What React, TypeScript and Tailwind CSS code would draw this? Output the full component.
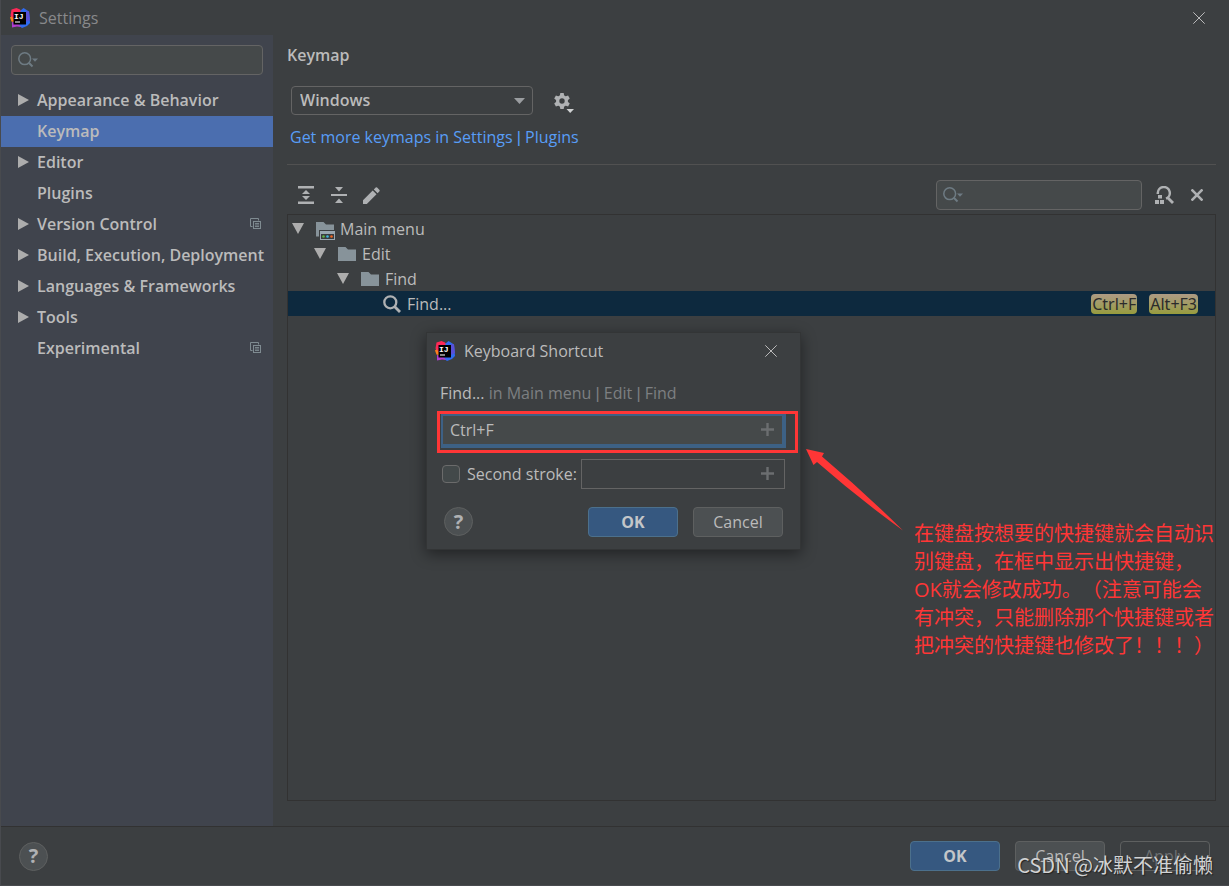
import { useState } from 'react';
import type { ReactNode } from 'react';
import clsx from 'clsx';

type Category = {
  label: string;
  expandable?: boolean;
  projectLevel?: boolean;
};

const categories: Category[] = [
  { label: 'Appearance & Behavior', expandable: true },
  { label: 'Keymap' },
  { label: 'Editor', expandable: true },
  { label: 'Plugins' },
  { label: 'Version Control', expandable: true, projectLevel: true },
  { label: 'Build, Execution, Deployment', expandable: true },
  { label: 'Languages & Frameworks', expandable: true },
  { label: 'Tools', expandable: true },
  { label: 'Experimental', projectLevel: true },
];

function IdeaLogo() {
  return (
    <svg viewBox="0 0 20 20" className="size-5 shrink-0" aria-hidden="true">
      <path d="M0 9.5 2 7.5 5 10V14.5L1.5 13.5Z" fill="#fc801d" />
      <path d="M1.5 1.5 6.5 0 10 1.5 12 4 9 10 4 11 0.5 7.5Z" fill="#fe2857" />
      <path d="M10.5 2.5 13.5 0 19 3.5 20 15 17 18 12 20 8 17Z" fill="#2f6bf0" />
      <path d="M16 3 19 3.5 20 12 16 14Z" fill="#5a50d8" />
      <path d="M2 14 8 15 11 19 7 18.5 2 19.5Z" fill="#b13ccf" />
      <rect x="3.5" y="4" width="12.5" height="12.5" fill="#000" />
      <text x="4" y="10.5" fill="#fff" fontSize="8" fontWeight="700" fontFamily="Liberation Mono, monospace">
        IJ
      </text>
      <rect x="5" y="13.4" width="5" height="1.2" fill="#ddd" />
    </svg>
  );
}

function ArrowRight() {
  return (
    <svg viewBox="0 0 11 12" className="h-3 w-[11px]" aria-hidden="true">
      <path d="M0 0 11 6 0 12Z" fill="#adadad" />
    </svg>
  );
}

function ArrowDown() {
  return (
    <svg viewBox="0 0 12 11" className="h-[11px] w-3 shrink-0" aria-hidden="true">
      <path d="M0 0H12L6 11Z" fill="#adadad" />
    </svg>
  );
}

function ProjectLevelIcon() {
  return (
    <svg viewBox="0 0 11 11" className="size-[11px]" fill="none" stroke="#7f8b91" aria-hidden="true">
      <path d="M2.5 8.5H0.5V0.5H8.5V2.5" />
      <rect x="3.5" y="3.5" width="7" height="7" />
      <path d="M5 5.5H9M5 7H9M5 8.5H9" strokeWidth="0.9" />
    </svg>
  );
}

function SearchFieldIcon() {
  return (
    <svg viewBox="0 0 20 16" className="h-4 w-5" fill="none" aria-hidden="true">
      <circle cx="6.7" cy="6.7" r="5.9" stroke="#6e7b83" strokeWidth="1.5" />
      <path d="M10.8 10.8 14.5 14.5" stroke="#6e7b83" strokeWidth="2" />
      <path d="M14 6.5H20L17 9.8Z" fill="#6e7b83" />
    </svg>
  );
}

function FolderIcon() {
  return (
    <svg viewBox="0 0 18 14" className="h-3.5 w-[18px]" aria-hidden="true">
      <path d="M0 0H7.5L10 2.5H18V14H0Z" fill="#87939a" />
    </svg>
  );
}

function MenuFolderIcon() {
  return (
    <svg viewBox="0 0 19 18" className="h-[18px] w-[19px]" aria-hidden="true">
      <path d="M0 0H7.5L10 2.5H18V8H3V14.5H0Z" fill="#87939a" />
      <path d="M4 9H19V18H4Z" fill="#9aa7b0" />
      <rect x="5" y="12" width="13" height="5" fill="#393c3e" />
      <circle cx="7.5" cy="14.5" r="1.3" fill="#62b543" />
      <circle cx="11.5" cy="14.5" r="1.3" fill="#40b6e0" />
      <circle cx="15.5" cy="14.5" r="1.3" fill="#f26522" />
    </svg>
  );
}

function MagnifierIcon() {
  return (
    <svg viewBox="0 0 18 18" className="size-[18px]" fill="none" stroke="#afb1b3" aria-hidden="true">
      <circle cx="7.3" cy="7.3" r="6" strokeWidth="2.3" />
      <path d="M11.5 11.5 17 17" strokeWidth="2.8" />
    </svg>
  );
}

function ExpandAllIcon() {
  return (
    <svg viewBox="0 0 16 18" className="h-[18px] w-4" fill="#afb1b3" aria-hidden="true">
      <path d="M0 0H16V2.4H0ZM0 15.6H16V18H0ZM8 4 12 8H4ZM4 10H12L8 14Z" />
    </svg>
  );
}

function CollapseAllIcon() {
  return (
    <svg viewBox="0 0 16 16" className="size-4" fill="#afb1b3" aria-hidden="true">
      <path d="M0 6.9H16V9.1H0ZM4 0H12L8 4.5ZM8 11.5 12 16H4Z" />
    </svg>
  );
}

function PencilIcon() {
  return (
    <svg viewBox="0 0 17 17" className="size-[17px]" fill="#afb1b3" aria-hidden="true">
      <path d="M0 13.2 9.7 3.5 13.5 7.3 3.8 17H0ZM10.8 2.4 12.7 0.5Q13.4 0 14.1 0.5L16.5 2.9Q17 3.6 16.5 4.3L14.6 6.2Z" />
    </svg>
  );
}

function FindByShortcutIcon() {
  return (
    <svg viewBox="0 0 19 18" className="h-[18px] w-[19px]" aria-hidden="true">
      <path d="M2.8 8V7A6 6 0 1 1 11 12.6" fill="none" stroke="#afb1b3" strokeWidth="2.5" />
      <path d="M12.5 11.5 18 17" stroke="#afb1b3" strokeWidth="2.8" />
      <path d="M3 9H7V12.5H3ZM0 14H4V18H0ZM5 14H9V18H5Z" fill="#afb1b3" />
    </svg>
  );
}

function GearIcon() {
  return (
    <svg viewBox="0 0 20 20" className="size-5" aria-hidden="true">
      <g fill="#afb1b3">
        <path
          fillRule="evenodd"
          d="M8 2A6 6 0 0 1 8 14 6 6 0 0 1 8 2ZM8 5.3A2.7 2.7 0 0 0 8 10.7 2.7 2.7 0 0 0 8 5.3Z"
        />
        <path d="M6.3 0H9.7L10.2 3H5.8ZM6.3 16H9.7L10.2 13H5.8Z" />
        <path d="M6.3 0H9.7L10.2 3H5.8ZM6.3 16H9.7L10.2 13H5.8Z" transform="rotate(60 8 8)" />
        <path d="M6.3 0H9.7L10.2 3H5.8ZM6.3 16H9.7L10.2 13H5.8Z" transform="rotate(-60 8 8)" />
      </g>
      <path d="M12.5 16H20L16.2 20Z" fill="#d0d2d3" />
    </svg>
  );
}

function CloseIcon() {
  return (
    <svg viewBox="0 0 12 12" className="size-3" stroke="#bbbbbb" aria-hidden="true">
      <path d="M0.3 0.3 11.7 11.7M11.7 0.3 0.3 11.7" />
    </svg>
  );
}

function PlusIcon() {
  return (
    <svg viewBox="0 0 13 13" className="size-[13px] shrink-0" stroke="#6b6e70" strokeWidth="2.4" aria-hidden="true">
      <path d="M6.5 0V13M0 6.5H13" />
    </svg>
  );
}

// Open Sans draws a very wide bar, so path separators use a narrower face
function Pipe() {
  return <span className="font-['Liberation_Sans',sans-serif]">|</span>;
}

function HelpButton() {
  return (
    <button
      type="button"
      aria-label="Help"
      className="flex size-[29px] items-center justify-center rounded-full border border-[#5e6060] bg-[#4c5052] text-xl font-bold text-[#afb1b3]"
    >
      ?
    </button>
  );
}

function DialogButton({ primary, disabled, children }: { primary?: boolean; disabled?: boolean; children: ReactNode }) {
  return (
    <button
      type="button"
      disabled={disabled}
      className={clsx(
        'flex h-[30px] w-[90px] items-center justify-center rounded border',
        primary && 'border-[#4c708c] bg-[#365880] font-bold text-[#c3c6c9]',
        disabled && 'border-[#5e6060] text-[#6e7072]',
        !primary && !disabled && 'border-[#5e6060] bg-[#4c5052] text-[#bbbbbb]',
      )}
    >
      {children}
    </button>
  );
}

function SearchField({ label, className }: { label: string; className: string }) {
  return (
    <div
      className={clsx('flex h-[30px] items-center gap-1 rounded-sm border border-[#646464] bg-[#45494a] px-1.5', className)}
    >
      <SearchFieldIcon />
      <input type="text" aria-label={label} className="min-w-0 flex-1 bg-transparent text-[#bbbbbb] outline-none" />
    </div>
  );
}

function Sidebar() {
  const [selected, setSelected] = useState('Keymap');

  return (
    <aside className="w-[272px] shrink-0 bg-[#40444d] pt-[10px]">
      <SearchField label="Search settings" className="mx-[10px]" />
      <nav className="mt-[10px] font-semibold">
        {categories.map(({ label, expandable, projectLevel }) => (
          <button
            key={label}
            type="button"
            onClick={() => setSelected(label)}
            className={clsx(
              'flex h-[31px] w-full items-center pr-3 pb-0.5 pl-[17px] text-left whitespace-nowrap',
              selected === label && 'bg-[#4b6eaf]',
            )}
          >
            <span className="w-[19px] shrink-0">{expandable && <ArrowRight />}</span>
            <span className="flex-1">{label}</span>
            {projectLevel && <ProjectLevelIcon />}
          </button>
        ))}
      </nav>
    </aside>
  );
}

function KeyCap({ children }: { children: ReactNode }) {
  return (
    <kbd className="flex h-5 items-center rounded bg-linear-to-b from-[#ad9a84] to-[#979c3c] px-px font-['Noto_Sans','Open_Sans',sans-serif] text-base text-[#2b2b2b]">
      {children}
    </kbd>
  );
}

function ActionsTree() {
  return (
    <div className="flex-1 border border-[#323232] pt-px">
      <div className="flex h-[25px] items-center pl-1">
        <ArrowDown />
        <span className="mr-[5px] ml-3 pt-1">
          <MenuFolderIcon />
        </span>
        Main menu
      </div>
      <div className="flex h-[25px] items-center pl-[26px]">
        <ArrowDown />
        <span className="mr-1.5 ml-3">
          <FolderIcon />
        </span>
        Edit
      </div>
      <div className="flex h-[25px] items-center pl-[49px]">
        <ArrowDown />
        <span className="mr-1.5 ml-3">
          <FolderIcon />
        </span>
        Find
      </div>
      <div className="flex h-[25px] items-center bg-[#0d293e] pr-[17px] pl-[95px]">
        <MagnifierIcon />
        <span className="ml-1.5 flex-1">Find...</span>
        <div className="flex gap-3">
          <KeyCap>Ctrl+F</KeyCap>
          <KeyCap>Alt+F3</KeyCap>
        </div>
      </div>
    </div>
  );
}

function KeymapPanel() {
  return (
    <main className="flex min-w-0 flex-1 flex-col pt-2 pr-[13px] pb-[25px] pl-[14px]">
      <h1 className="h-6 leading-6 font-semibold">Keymap</h1>
      <div className="mt-[19px] flex items-center pl-1">
        <div className="relative">
          <select
            aria-label="Keymap"
            className="h-[29px] w-[242px] appearance-none rounded-sm border border-[#646464] bg-[#3c3f41] px-2 pb-0.5 font-semibold outline-none"
          >
            <option>Windows</option>
          </select>
          <svg viewBox="0 0 11 6" className="pointer-events-none absolute top-3 right-2 h-1.5 w-[11px]" aria-hidden="true">
            <path d="M0 0H11L5.5 6Z" fill="#9a9da0" />
          </svg>
        </div>
        <button type="button" aria-label="Keymap actions" className="ml-[21px] pt-1">
          <GearIcon />
        </button>
      </div>
      <div className="mt-2.5 pl-[3px] leading-6">
        <a href="#plugins" className="text-[#589df6]">
          Get more keymaps in Settings <Pipe /> Plugins
        </a>
      </div>
      <hr className="mt-3.5 border-[#515151]" />
      <div className="mt-[15px] mb-1 flex items-center pl-[11px]">
        <button type="button" aria-label="Expand all">
          <ExpandAllIcon />
        </button>
        <button type="button" aria-label="Collapse all" className="ml-[17px]">
          <CollapseAllIcon />
        </button>
        <button type="button" aria-label="Edit shortcut" className="ml-4">
          <PencilIcon />
        </button>
        <SearchField label="Search actions" className="ml-auto w-[206px]" />
        <button type="button" aria-label="Find actions by shortcut" className="ml-[13px]">
          <FindByShortcutIcon />
        </button>
        <button type="button" aria-label="Clear filter" className="mr-[13px] ml-[17px]">
          <svg viewBox="0 0 12 12" className="size-3" stroke="#afb1b3" strokeWidth="2.6" aria-hidden="true">
            <path d="M0.5 0.5 11.5 11.5M11.5 0.5 0.5 11.5" />
          </svg>
        </button>
      </div>
      <ActionsTree />
    </main>
  );
}

function ShortcutNote() {
  return (
    <div className="absolute top-[115px] left-full ml-1.5 flex w-[415px]">
      <svg viewBox="0 0 98 83" className="h-[83px] w-[98px] shrink-0" aria-hidden="true">
        <path d="M0 1 18 5 16 8.5Q58 44 97 82.5Q52 50 11 14L7.5 17Z" fill="#ff3636" />
      </svg>
      <p className="mt-[72px] ml-2.5 text-xl leading-7 whitespace-nowrap text-[#ff3636] [text-spacing-trim:space-all]">
        在键盘按想要的快捷键就会自动识
        <br />
        别键盘，在框中显示出快捷键，
        <br />
        OK就会修改成功。（注意可能会
        <br />
        有冲突，只能删除那个快捷键或者
        <br />
        把冲突的快捷键也修改了！！！）
      </p>
    </div>
  );
}

function ShortcutDialog() {
  const [shortcut, setShortcut] = useState('Ctrl+F');

  return (
    <div
      role="dialog"
      aria-label="Keyboard Shortcut"
      className="relative w-[375px] border border-[#333536] bg-[#3c3f41] pb-3 shadow-[0_4px_14px_rgba(0,0,0,0.45)]"
    >
      <header className="flex h-[37px] items-center pr-[23px] pl-2">
        <IdeaLogo />
        <span className="ml-[9px] flex-1">Keyboard Shortcut</span>
        <button type="button" aria-label="Close dialog">
          <CloseIcon />
        </button>
      </header>
      <p className="mt-[11px] pl-[13px] leading-6 text-[#7d7f81]">
        <span className="text-[#bbbbbb]">Find...</span> in Main menu <Pipe /> Edit <Pipe /> Find
      </p>
      <div className="mt-[5px] mr-0.5 ml-[10px] border-[3px] border-[#ff3636] px-px pb-0.5">
        <div className="mr-2 flex h-[34px] items-center border-t-2 border-r-4 border-b-4 border-l-2 border-[#3d6185] bg-[#45494a] pr-2 pl-[7px]">
          <input
            type="text"
            aria-label="First stroke"
            value={shortcut}
            onChange={(event) => setShortcut(event.target.value)}
            className="min-w-0 flex-1 bg-transparent outline-none"
          />
          <PlusIcon />
        </div>
      </div>
      <div className="mt-1.5 flex items-center pr-[15px] pl-[15px]">
        <input
          id="second-stroke"
          type="checkbox"
          className="size-[18px] shrink-0 appearance-none rounded-sm border border-[#6b6b6b] bg-[#43494a]"
        />
        <label htmlFor="second-stroke" className="ml-[7px] whitespace-nowrap">
          Second stroke:
        </label>
        <div className="ml-1 flex h-[30px] min-w-0 flex-1 items-center border border-[#646464] pr-2.5 pl-2">
          <input type="text" aria-label="Second stroke keys" className="min-w-0 flex-1 bg-transparent outline-none" />
          <PlusIcon />
        </div>
      </div>
      <footer className="mt-[18px] flex items-center gap-[15px] px-[17px]">
        <div className="flex-1">
          <HelpButton />
        </div>
        <DialogButton primary>OK</DialogButton>
        <DialogButton>Cancel</DialogButton>
      </footer>
      <ShortcutNote />
    </div>
  );
}

export default function App() {
  return (
    <div className="relative flex min-h-screen flex-col overflow-hidden border-b border-l border-[#484a4e] bg-[#3c3f41] font-['Open_Sans','Noto_Sans_CJK_SC',sans-serif] text-base text-[#bbbbbb]">
      <header className="flex h-[35px] items-center pr-6 pl-[9px]">
        <IdeaLogo />
        <span className="ml-[9px] flex-1 text-[#88898b]">Settings</span>
        <button type="button" aria-label="Close">
          <CloseIcon />
        </button>
      </header>

      <div className="flex flex-1">
        <Sidebar />
        <KeymapPanel />
      </div>

      <footer className="flex h-[59px] items-center gap-[15px] border-t border-[#323232] pr-[19px] pl-[18px]">
        <div className="flex-1">
          <HelpButton />
        </div>
        <DialogButton primary>OK</DialogButton>
        <DialogButton>Cancel</DialogButton>
        <DialogButton disabled>Apply</DialogButton>
      </footer>

      <div className="absolute inset-0 flex items-center justify-center pr-[3px] pb-1">
        <ShortcutDialog />
      </div>

      <p className="absolute right-4 bottom-1.5 font-['Noto_Sans_CJK_SC',sans-serif] text-xl leading-7 text-[#d2d3d4] [text-shadow:1px_1px_1px_#222]">
        CSDN @冰默不准偷懒
      </p>
    </div>
  );
}
